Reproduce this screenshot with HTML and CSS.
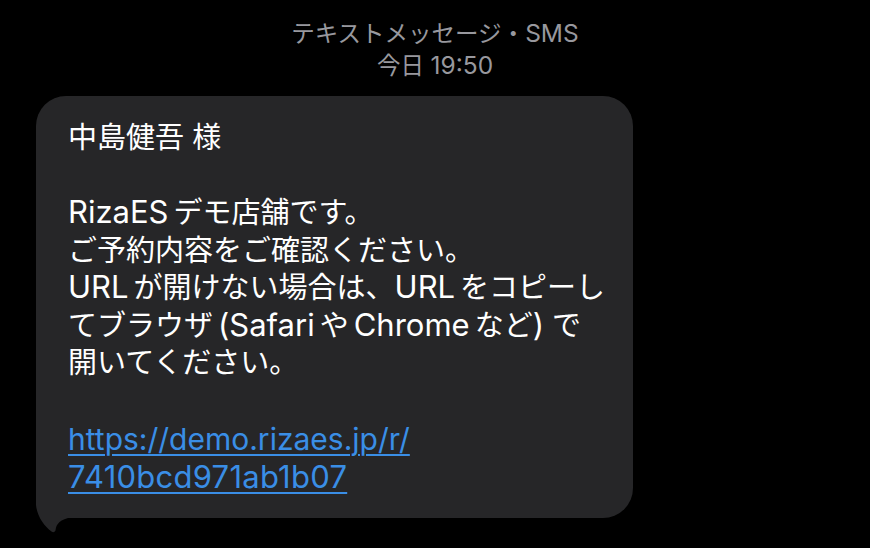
FILE: index.html
```html
<!DOCTYPE html>
<html lang="ja">
<head>
<meta charset="utf-8">
<link rel="stylesheet" href="styles.css">
</head>
<body>
<div class="screen">
  <header class="meta">
    <div class="meta-line">テキストメッセージ・<span class="lat">SMS</span></div>
    <div class="meta-line">今日 <span class="lat">19:50</span></div>
  </header>
  <div class="thread">
    <div class="bubble">
      <svg class="tail" viewBox="0 0 60 60" width="60" height="60" aria-hidden="true">
        <path d="M0,0 L0,27 C1,38 8,48 15.5,53.5 Q18,55.5 19.5,52.5 C20,48 21.5,43 32,40 L60,40 L60,0 Z" fill="#262628"/>
      </svg>
      <p class="line">中島健吾 様</p>
      <p class="line">&nbsp;</p>
      <p class="line"><span class="lat">RizaES</span><span class="gap"></span>デモ店舗です。</p>
      <p class="line">ご予約内容をご確認ください。</p>
      <p class="line"><span class="lat">URL</span><span class="gap"></span>が開けない場合は、<span class="lat">URL</span><span class="gap"></span>をコピーし</p>
      <p class="line">てブラウザ<span class="gap"></span><span class="lat">(Safari</span><span class="gap"></span>や<span class="gap"></span><span class="lat">Chrome</span><span class="gap"></span>など<span class="lat">)</span><span class="gap wide"></span>で</p>
      <p class="line">開いてください。</p>
      <p class="line">&nbsp;</p>
      <p class="line link-line"><a class="link lat url" href="#">https://demo.rizaes.jp/r/</a></p>
      <p class="line link-line"><a class="link lat code" href="#">7410bcd971ab1b07</a></p>
    </div>
  </div>
</div>
</body>
</html>
```

FILE: styles.css
```css
html, body {
  margin: 0;
  padding: 0;
  background: #000;
}
body {
  width: 870px;
  height: 548px;
  overflow: hidden;
  font-family: Inter, "Noto Sans CJK JP", sans-serif;
}
.screen {
  display: flex;
  flex-direction: column;
  padding-top: 18px;
}
.meta {
  display: flex;
  flex-direction: column;
  align-items: center;
  color: #98989e;
  font-size: 23.5px;
  line-height: 32px;
}
.meta-line {
  height: 32px;
}
.meta .lat {
  font-size: 24.5px;
  line-height: 1;
}
.thread {
  margin-top: 14px;
  padding-left: 36px;
}
.bubble {
  position: relative;
  width: 597px;
  box-sizing: border-box;
  padding: 23px 20px 24px 32px;
  background: #262628;
  border-radius: 30px;
  color: #fff;
  font-size: 29px;
  line-height: 37.5px;
}
.line {
  position: relative;
  z-index: 1;
  height: 37.5px;
  margin: 0;
  white-space: nowrap;
}
.link-line {
  top: 2px;
}
.lat {
  font-size: 31px;
  line-height: 1;
}
.gap {
  display: inline-block;
  width: 5px;
}
.gap.wide {
  width: 8px;
}
.link {
  color: #3a8ee6;
  text-decoration: underline;
  text-decoration-thickness: 2px;
  text-underline-offset: 4px;
}
.link.url {
  font-size: 30px;
}
.link.code {
  letter-spacing: 0.25px;
}
.tail {
  position: absolute;
  z-index: 0;
  left: 0;
  top: 382px;
}
```
